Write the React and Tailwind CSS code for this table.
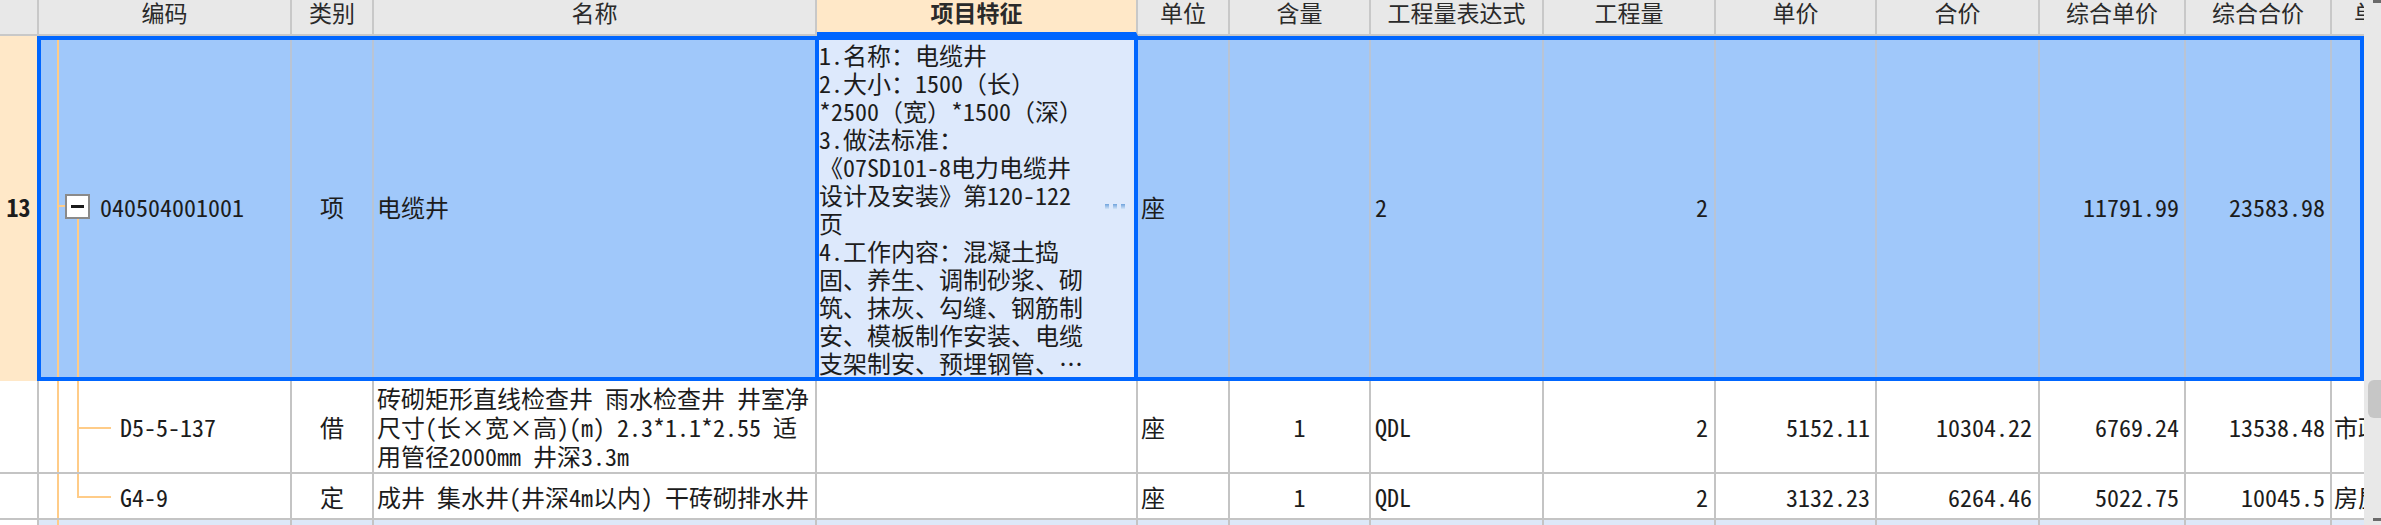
const F = "font-['Noto_Sans_Mono_CJK_SC','Noto_Sans_CJK_SC',sans-serif]"

const headers = [
  ['w-[39px]', ''],
  ['w-[253px]', '编码'],
  ['w-[82px]', '类别'],
  ['w-[443px]', '名称'],
  ['w-[321px]', '项目特征'],
  ['w-[92px]', '单位'],
  ['w-[141px]', '含量'],
  ['w-[173px]', '工程量表达式'],
  ['w-[172px]', '工程量'],
  ['w-[161px]', '单价'],
  ['w-[163px]', '合价'],
  ['w-[146px]', '综合单价'],
  ['w-[146px]', '综合合价'],
]

const featLines = [
  '1.名称：电缆井',
  '2.大小：1500（长）',
  '*2500（宽）*1500（深）',
  '3.做法标准：',
  '《07SD101-8电力电缆井',
  '设计及安装》第120-122',
  '页',
  '4.工作内容：混凝土捣',
  '固、养生、调制砂浆、砌',
  '筑、抹灰、勾缝、钢筋制',
  '安、模板制作安装、电缆',
  '支架制安、预埋钢管、…',
]

const details = [
  {
    code: 'D5-5-137',
    type: '借',
    name: ['砖砌矩形直线检查井 雨水检查井 井室净', '尺寸(长×宽×高)(m) 2.3*1.1*2.55 适', '用管径2000mm 井深3.3m'],
    price: '5152.11',
    total: '10304.22',
    cprice: '6769.24',
    ctotal: '13538.48',
    last: '市政',
    h: 'h-[93px]',
    end: false,
  },
  {
    code: 'G4-9',
    type: '定',
    name: ['成井 集水井(井深4m以内) 干砖砌排水井'],
    price: '3132.23',
    total: '6264.46',
    cprice: '5022.75',
    ctotal: '10045.5',
    last: '房屋',
    h: 'h-[46px]',
    end: true,
  },
]

const HeaderRow = () => (
  <div className="flex h-[36px] shrink-0 bg-[#e8e8e8] text-[23px] leading-[24px] text-[#2a2a2a]">
    {headers.map(([w, label]) =>
      label === '项目特征' ? (
        <div key={label} className={`${w} flex justify-center border-r-2 border-b-4 border-r-[#c8c8c8] border-b-[#0066ff] bg-[#ffe8c8] font-bold`}>
          {label}
        </div>
      ) : (
        <div key={label || 'corner'} className={`${w} flex justify-center border-r-2 border-b-2 border-[#c8c8c8]`}>
          {label}
        </div>
      )
    )}
    <div className="flex w-[32px] overflow-hidden border-b-2 border-[#c8c8c8] pl-[22px] whitespace-nowrap">单位</div>
  </div>
)

const SelectedRow = () => (
  <div className="flex h-[345px] shrink-0 text-[24px] leading-[28px]">
    <div className="flex w-[37px] items-center justify-center bg-[#ffe8c8] pb-[4px] font-bold">13</div>
    <div className="flex w-[2327px] border-4 border-[#0066ff] bg-[#a0c8fa]">
      <div className="relative w-[251px] border-r-2 border-[#b9c4d4]">
        <div className="absolute left-[16px] top-0 h-full w-[2px] bg-[#ffcc88]" />
        <div className="absolute left-[18px] top-[165px] h-[2px] w-[6px] bg-[#ffcc88]" />
        <div className="absolute bottom-0 left-[36px] top-[179px] w-[2px] bg-[#ffcc88]" />
        <div className="flex h-full items-center pb-[4px] pl-[24px]">
          <div className="flex h-[25px] w-[25px] items-center justify-center border-2 border-[#8a8a8a] bg-white">
            <div className="h-[3px] w-[13px] bg-[#1a1a1a]" />
          </div>
          <span className="ml-[10px]">040504001001</span>
        </div>
      </div>
      <div className="flex w-[82px] items-center justify-center border-r-2 border-[#b9c4d4] pb-[4px]">项</div>
      <div className="flex w-[441px] items-center pb-[4px] pl-[3px]">电缆井</div>
      <div className="flex w-[323px] items-center border-x-4 border-[#0066ff] bg-[#dde9fc]">
        <div className="w-[286px] whitespace-nowrap">
          {featLines.map((l) => (
            <div key={l}>{l}</div>
          ))}
        </div>
        <div className="flex gap-[4px] pb-[4px]">
          <span className="h-[6px] w-[4px] bg-gradient-to-b from-[#6fa3dc] to-[#e6f0fc]" />
          <span className="h-[6px] w-[4px] bg-gradient-to-b from-[#6fa3dc] to-[#e6f0fc]" />
          <span className="h-[6px] w-[4px] bg-gradient-to-b from-[#6fa3dc] to-[#e6f0fc]" />
        </div>
      </div>
      <div className="flex w-[92px] items-center border-r-2 border-[#b9c4d4] pb-[4px] pl-[3px]">座</div>
      <div className="w-[141px] border-r-2 border-[#b9c4d4]" />
      <div className="flex w-[173px] items-center border-r-2 border-[#b9c4d4] pb-[4px] pl-[4px]">2</div>
      <div className="flex w-[172px] items-center justify-end border-r-2 border-[#b9c4d4] pb-[4px] pr-[6px]">2</div>
      <div className="w-[161px] border-r-2 border-[#b9c4d4]" />
      <div className="w-[163px] border-r-2 border-[#b9c4d4]" />
      <div className="flex w-[146px] items-center justify-end border-r-2 border-[#b9c4d4] pb-[4px] pr-[5px]">11791.99</div>
      <div className="flex w-[146px] items-center justify-end border-r-2 border-[#b9c4d4] pb-[4px] pr-[5px]">23583.98</div>
      <div className="w-[28px]" />
    </div>
  </div>
)

const DetailRow = ({ d }) => (
  <div className={`flex ${d.h} shrink-0 border-b-2 border-[#c4c4c4] text-[24px] leading-[29px]`}>
    <div className="w-[39px] border-r-2 border-[#c4c4c4]" />
    <div className="relative flex w-[253px] items-center border-r-2 border-[#c4c4c4] pl-[81px]">
      <div className="absolute left-[18px] top-0 h-full w-[2px] bg-[#ffcc88]" />
      {d.end ? (
        <div className="absolute left-[38px] top-0 h-1/2 w-[2px] bg-[#ffcc88]" />
      ) : (
        <div className="absolute left-[38px] top-0 h-full w-[2px] bg-[#ffcc88]" />
      )}
      <div className="absolute left-[38px] top-1/2 h-[2px] w-[34px] bg-[#ffcc88]" />
      {d.code}
    </div>
    <div className="flex w-[82px] items-center justify-center border-r-2 border-[#c4c4c4]">{d.type}</div>
    <div className="flex w-[443px] flex-col justify-center overflow-hidden border-r-2 border-[#c4c4c4] pl-[3px] whitespace-nowrap">
      {d.name.map((l) => (
        <div key={l}>{l}</div>
      ))}
    </div>
    <div className="w-[321px] border-r-2 border-[#c4c4c4]" />
    <div className="flex w-[92px] items-center border-r-2 border-[#c4c4c4] pl-[3px]">座</div>
    <div className="flex w-[141px] items-center justify-center border-r-2 border-[#c4c4c4]">1</div>
    <div className="flex w-[173px] items-center border-r-2 border-[#c4c4c4] pl-[4px]">QDL</div>
    <div className="flex w-[172px] items-center justify-end border-r-2 border-[#c4c4c4] pr-[6px]">2</div>
    <div className="flex w-[161px] items-center justify-end border-r-2 border-[#c4c4c4] pr-[5px]">{d.price}</div>
    <div className="flex w-[163px] items-center justify-end border-r-2 border-[#c4c4c4] pr-[6px]">{d.total}</div>
    <div className="flex w-[146px] items-center justify-end border-r-2 border-[#c4c4c4] pr-[5px]">{d.cprice}</div>
    <div className="flex w-[146px] items-center justify-end border-r-2 border-[#c4c4c4] pr-[5px]">{d.ctotal}</div>
    <div className="flex w-[32px] items-center overflow-hidden pl-[2px] whitespace-nowrap">{d.last}</div>
  </div>
)

const TailRow = () => (
  <div className="flex h-[20px] shrink-0">
    <div className="w-[39px] border-r-2 border-[#c4c4c4] bg-white" />
    <div className="relative w-[253px] border-r-2 border-[#c4c4c4] bg-[#dde8f8]">
      <div className="absolute left-[18px] top-0 h-full w-[2px] bg-[#ffcc88]" />
    </div>
    <div className="w-[82px] border-r-2 border-[#c4c4c4] bg-[#dde8f8]" />
    <div className="w-[443px] border-r-2 border-[#c4c4c4] bg-[#dde8f8]" />
    <div className="w-[321px] border-r-2 border-[#c4c4c4] bg-[#dde8f8]" />
    <div className="w-[92px] border-r-2 border-[#c4c4c4] bg-[#dde8f8]" />
    <div className="w-[141px] border-r-2 border-[#c4c4c4] bg-[#dde8f8]" />
    <div className="w-[173px] border-r-2 border-[#c4c4c4] bg-[#dde8f8]" />
    <div className="w-[172px] border-r-2 border-[#c4c4c4] bg-[#dde8f8]" />
    <div className="w-[161px] border-r-2 border-[#c4c4c4] bg-[#dde8f8]" />
    <div className="w-[163px] border-r-2 border-[#c4c4c4] bg-[#dde8f8]" />
    <div className="w-[146px] border-r-2 border-[#c4c4c4] bg-[#dde8f8]" />
    <div className="w-[146px] border-r-2 border-[#c4c4c4] bg-[#dde8f8]" />
    <div className="w-[32px] bg-[#dde8f8]" />
  </div>
)

const Scrollbar = () => (
  <div className="flex w-[17px] flex-col items-end bg-[#e8e8e8]">
    <div className="h-[3px] w-[8px] bg-[#6a6a6a]" />
    <div className="mt-[377px] h-[38px] w-[13px] rounded-l-[6px] bg-[#c6c6c6]" />
    <div className="mt-[100px] h-[3px] w-[8px] bg-[#6a6a6a]" />
  </div>
)

export default function App() {
  return (
    <div className={`flex h-[525px] w-[2381px] overflow-hidden bg-white text-[#1c1c1c] ${F}`}>
      <div className="flex w-[2364px] shrink-0 flex-col">
        <HeaderRow />
        <SelectedRow />
        {details.map((d) => (
          <DetailRow key={d.code} d={d} />
        ))}
        <TailRow />
      </div>
      <Scrollbar />
    </div>
  )
}
